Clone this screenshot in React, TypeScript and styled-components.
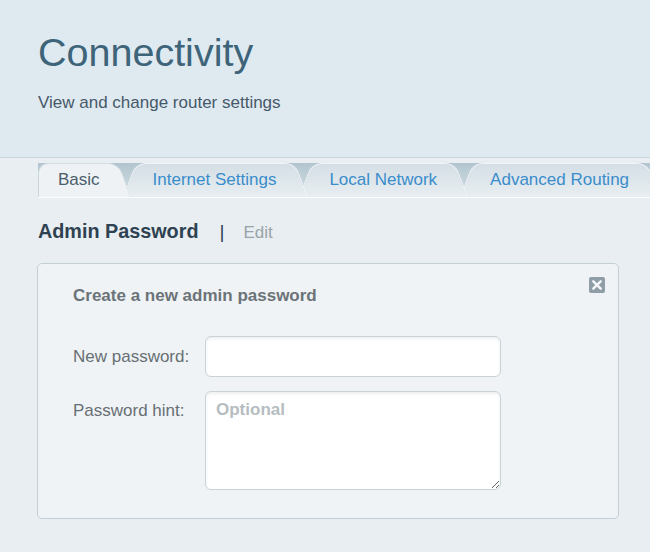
import React from 'react';
import styled, { createGlobalStyle } from 'styled-components';

const Global = createGlobalStyle`
  html, body { margin: 0; padding: 0; background: #e8eef2; }
  body { font-family: "Liberation Sans", Arial, Helvetica, sans-serif; overflow: hidden; }
  * { box-sizing: border-box; }
`;

const Page = styled.div`
  width: 650px;
  min-height: 552px;
  background: #e8eef2;
`;

const Header = styled.header`
  height: 158px;
  padding: 29px 0 0 38px;
  background: #dfe9f0;
  border-bottom: 1px solid #cad6dd;
`;

const Title = styled.h1`
  margin: 0;
  font-weight: normal;
  font-size: 39.5px;
  line-height: 46px;
  color: #3d6479;
`;

const Subtitle = styled.p`
  margin: 18px 0 0;
  font-size: 17px;
  line-height: 20px;
  color: #46596a;
`;

const TabStrip = styled.nav`
  display: flex;
  margin: 5px 0 0 38px;
  height: 35px;
  background: linear-gradient(to bottom, #b2c5cf, #d6e1e6);
  border-bottom: 1px solid #fafcfd;
  overflow: hidden;
`;

const Tab = styled.div<{ $active?: boolean; $first?: boolean; $z: number }>`
  position: relative;
  z-index: ${(p) => p.$z};
  flex: none;
  height: 34px;
  display: flex;
  align-items: center;
  padding: 0 31px 0 ${(p) => (p.$first ? 20 : 30)}px;
  margin-left: ${(p) => (p.$first ? 0 : -8)}px;
  font-size: 17px;
  color: ${(p) => (p.$active ? '#4b5d69' : '#3a8dcb')};
  cursor: pointer;

  &::before,
  &::after {
    content: '';
    position: absolute;
    top: 0;
    bottom: 0;
    width: 60%;
    background: ${(p) =>
      p.$active ? '#eef2f5' : 'linear-gradient(to bottom, #d4dfe5, #e8eef2)'};
    border-top: 1px solid ${(p) => (p.$active ? '#d3dde2' : '#f1f5f7')};
  }
  &::before {
    left: 0;
    border-left: 1px solid ${(p) => (p.$active ? '#cbd6dc' : '#f3f6f8')};
    border-top-left-radius: 10px;
    transform-origin: bottom left;
    transform: ${(p) => (p.$first ? 'none' : 'skewX(-20deg)')};
  }
  &::after {
    right: 0;
    border-right: 1px solid ${(p) => (p.$active ? '#d9e2e7' : '#f3f6f8')};
    border-top-right-radius: 10px;
    transform-origin: bottom right;
    transform: skewX(20deg);
  }
`;

const TabLabel = styled.span`
  position: relative;
  z-index: 1;
  white-space: nowrap;
`;

const SectionHead = styled.div`
  display: flex;
  align-items: baseline;
  margin: 21px 0 0 38px;
  line-height: 24px;
`;

const SectionTitle = styled.h2`
  margin: 0;
  font-size: 19.8px;
  font-weight: bold;
  color: #2e4251;
`;

const Divider = styled.span`
  margin: 0 19px 0 21px;
  font-size: 19px;
  color: #2e4251;
`;

const EditLink = styled.span`
  font-size: 17px;
  color: #9aa3a8;
`;

const Card = styled.section`
  position: relative;
  margin: 18px 0 0 37px;
  width: 582px;
  padding: 22px 35px 28px;
  background: #eff3f6;
  border: 1px solid #c4cfd5;
  border-radius: 5px;
`;

const CardTitle = styled.h3`
  margin: 0 0 30px;
  font-size: 17px;
  line-height: 20px;
  font-weight: bold;
  color: #6b7378;
`;

const CloseButton = styled.button`
  position: absolute;
  top: 13px;
  right: 13px;
  width: 16px;
  height: 16px;
  padding: 0;
  border: 0;
  background: none;
  cursor: pointer;
  display: block;
`;

const Row = styled.div<{ $top?: boolean }>`
  display: flex;
  align-items: ${(p) => (p.$top ? 'flex-start' : 'center')};
  & + & {
    margin-top: 14px;
  }
`;

const Label = styled.label<{ $offset?: number }>`
  flex: none;
  width: 132px;
  margin-top: ${(p) => p.$offset ?? 0}px;
  font-size: 17px;
  line-height: 20px;
  color: #676f74;
`;

const fieldBase = `
  width: 296px;
  background: #fff;
  border: 1px solid #c8d2d7;
  border-radius: 6px;
  box-shadow: inset 0 2px 3px rgba(60, 80, 90, 0.09);
  font-family: "Liberation Sans", Arial, sans-serif;
  font-size: 17px;
  color: #444;
  outline: none;
`;

const TextInput = styled.input`
  ${fieldBase}
  height: 41px;
  padding: 0 10px;
`;

const TextArea = styled.textarea`
  ${fieldBase}
  height: 99px;
  padding: 8px 10px;
  font-weight: bold;
  line-height: 20px;
  resize: both;
  &::placeholder {
    color: #b6bdc1;
  }
`;

const tabs = ['Basic', 'Internet Settings', 'Local Network', 'Advanced Routing'];

export default function App() {
  return (
    <Page>
      <Global />
      <Header>
        <Title>Connectivity</Title>
        <Subtitle>View and change router settings</Subtitle>
      </Header>
      <TabStrip>
        {tabs.map((t, i) => (
          <Tab key={t} $active={i === 0} $first={i === 0} $z={10 - i}>
            <TabLabel>{t}</TabLabel>
          </Tab>
        ))}
      </TabStrip>
      <SectionHead>
        <SectionTitle>Admin Password</SectionTitle>
        <Divider>|</Divider>
        <EditLink>Edit</EditLink>
      </SectionHead>
      <Card>
        <CloseButton aria-label="Close">
          <svg width="16" height="16" viewBox="0 0 16 16">
            <rect x="0" y="0" width="16" height="16" rx="2" fill="#8e9da6" />
            <path d="M4.3 4.3 L11.7 11.7 M11.7 4.3 L4.3 11.7" stroke="#f4f7f9" strokeWidth="2.4" strokeLinecap="round" />
          </svg>
        </CloseButton>
        <CardTitle>Create a new admin password</CardTitle>
        <Row>
          <Label>New password:</Label>
          <TextInput type="password" />
        </Row>
        <Row $top>
          <Label $offset={10}>Password hint:</Label>
          <TextArea placeholder="Optional" />
        </Row>
      </Card>
    </Page>
  );
}
